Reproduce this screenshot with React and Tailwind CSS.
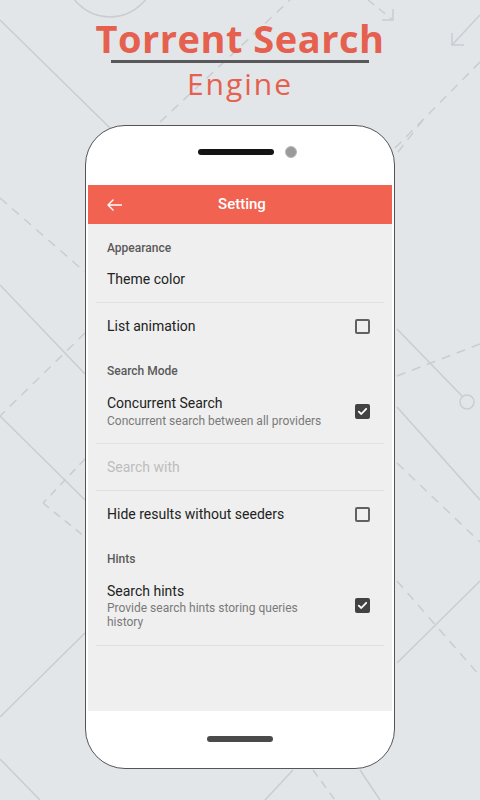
import React from "react";

const LINE = "#c9cdd1";

function BgLines() {
  return (
    <svg className="absolute inset-0" width="480" height="800" viewBox="0 0 480 800" fill="none">
      <g stroke={LINE} strokeWidth="1.5">
        <circle cx="110" cy="-28" r="45" />
        <line x1="0" y1="20" x2="110" y2="128" />
        <line x1="160" y1="122" x2="290" y2="0" strokeDasharray="9 7" />
        <line x1="368" y1="0" x2="393" y2="20" strokeDasharray="8 6" />
        <polyline points="382,20 393,20 393,9" />
        <line x1="480" y1="15" x2="452" y2="45" />
        <polyline points="452,33 452,45 464,45" />
        <line x1="480" y1="62" x2="395" y2="148" strokeDasharray="9 7" />
        <line x1="423" y1="120" x2="398" y2="152" strokeDasharray="9 7" />

        <line x1="0" y1="198" x2="85" y2="272" strokeDasharray="9 7" />
        <line x1="0" y1="285" x2="85" y2="374" />
        <line x1="85" y1="333" x2="0" y2="416" strokeDasharray="9 7" />
        <line x1="0" y1="416" x2="85" y2="500" />
        <line x1="85" y1="459" x2="43" y2="503" strokeDasharray="8 6" />
        <line x1="43" y1="503" x2="85" y2="537" strokeDasharray="8 6" />
        <line x1="85" y1="633" x2="0" y2="717" />
        <line x1="0" y1="759" x2="40" y2="800" />

        <line x1="397" y1="329" x2="462" y2="396" />
        <circle cx="467" cy="402" r="7" />
        <line x1="397" y1="376" x2="480" y2="344" strokeDasharray="9 7" />
        <line x1="397" y1="407" x2="480" y2="500" />
        <line x1="397" y1="463" x2="480" y2="542" strokeDasharray="9 7" />
        <line x1="397" y1="663" x2="480" y2="581" />
        <line x1="397" y1="581" x2="480" y2="676" strokeDasharray="9 7" />

        <line x1="293" y1="770" x2="265" y2="800" />
        <line x1="313" y1="770" x2="335" y2="800" strokeDasharray="8 6" />
        <line x1="360" y1="770" x2="380" y2="800" />
      </g>
    </svg>
  );
}

function Checkbox({ checked }) {
  if (checked) {
    return (
      <div className="w-[15px] h-[15px] rounded-[2px] bg-[#424242] flex items-center justify-center shrink-0">
        <svg width="11" height="11" viewBox="0 0 11 11" fill="none">
          <path d="M1.8 5.6 L4.3 8 L9.2 2.8" stroke="#ffffff" strokeWidth="1.8" strokeLinecap="round" strokeLinejoin="round" />
        </svg>
      </div>
    );
  }
  return <div className="w-[15px] h-[15px] rounded-[2px] border-2 border-[#616161] shrink-0" />;
}

function Section({ children }) {
  return (
    <div className="pl-[19px] pt-[14px] text-[12px] leading-[16px] font-medium text-[#5a5a5a]">{children}</div>
  );
}

function Divider() {
  return <div className="mx-[8px] h-px bg-[#e2e2e2]" />;
}

function Row({ title, subtitle, check, disabled, h }) {
  return (
    <div className={`flex items-center pl-[19px] pr-[22px] ${h ? "h-[46px]" : "py-[14px]"}`}>
      <div className="flex-1 min-w-0">
        <div className={`text-[14px] leading-[20px] ${disabled ? "text-[#bdbdbd]" : "text-[#222222]"}`}>{title}</div>
        {subtitle && (
          <div className="text-[12px] leading-[16px] text-[#7a7a7a] whitespace-nowrap">{subtitle}</div>
        )}
      </div>
      {check !== undefined && <Checkbox checked={check} />}
    </div>
  );
}

export default function App() {
  return (
    <div className="relative w-[480px] h-[800px] overflow-hidden bg-[#e3e6e8]" style={{ fontFamily: "Roboto, 'Noto Sans', sans-serif" }}>
      <BgLines />
      <div className="relative flex flex-col items-center">
        <h1
          className="mt-[19px] text-[38px] leading-[38px] font-bold text-[#e5604f] tracking-[0.5px]"
          style={{ fontFamily: "'Open Sans', sans-serif" }}
        >
          Torrent Search
        </h1>
        <div className="mt-[3px] w-[258px] h-[3px] bg-[#58585a]" />
        <p
          className="mt-[7px] text-[30px] leading-[28px] text-[#e5604f] tracking-[2px]"
          style={{ fontFamily: "'Open Sans', sans-serif" }}
        >
          Engine
        </p>
        <div className="mt-[27px] w-[310px] h-[644px] rounded-[40px] border-[1.5px] border-[#555555] bg-white px-[2px] flex flex-col overflow-hidden">
          <div className="h-[59px] pt-[20px] pl-[110px] flex items-start">
            <div className="flex items-center gap-[11px]">
              <div className="w-[76px] h-[6px] rounded-full bg-[#141414]" />
              <div className="w-[12px] h-[12px] rounded-full bg-[#9a9a9a] border border-[#b8b8b8]" />
            </div>
          </div>
          <div className="h-[39px] bg-[#f16251] flex items-center">
            <svg className="ml-[19px]" width="15" height="12" viewBox="0 0 15 12" fill="none">
              <path d="M14.5 6 H1 M6 1 L1 6 L6 11" stroke="#ffffff" strokeWidth="1.4" strokeLinecap="round" strokeLinejoin="round" />
            </svg>
            <div className="flex-1 text-center pr-[30px] text-white text-[15px] font-medium">Setting</div>
          </div>
          <div className="flex-1 bg-[#efefef] flex flex-col pt-[2px]">
            <Section>Appearance</Section>
            <Row title="Theme color" h />
            <Divider />
            <Row title="List animation" check={false} h />
            <Section>Search Mode</Section>
            <Row title="Concurrent Search" subtitle="Concurrent search between all providers" check={true} />
            <Divider />
            <Row title="Search with" disabled h />
            <Divider />
            <Row title="Hide results without seeders" check={false} h />
            <Section>Hints</Section>
            <div className="pt-[14px] pb-[16px]">
              <div className="flex items-center pl-[19px] pr-[22px]">
                <div className="flex-1">
                  <div className="text-[14px] leading-[20px] text-[#222222]">Search hints</div>
                  <div className="text-[12px] leading-[14px] text-[#7a7a7a] w-[215px]">Provide search hints storing queries history</div>
                </div>
                <Checkbox checked={true} />
              </div>
            </div>
            <Divider />
          </div>
          <div className="h-[57px] flex justify-center pt-[25px]">
            <div className="w-[66px] h-[6px] rounded-full bg-[#4a4a4a]" />
          </div>
        </div>
      </div>
    </div>
  );
}
